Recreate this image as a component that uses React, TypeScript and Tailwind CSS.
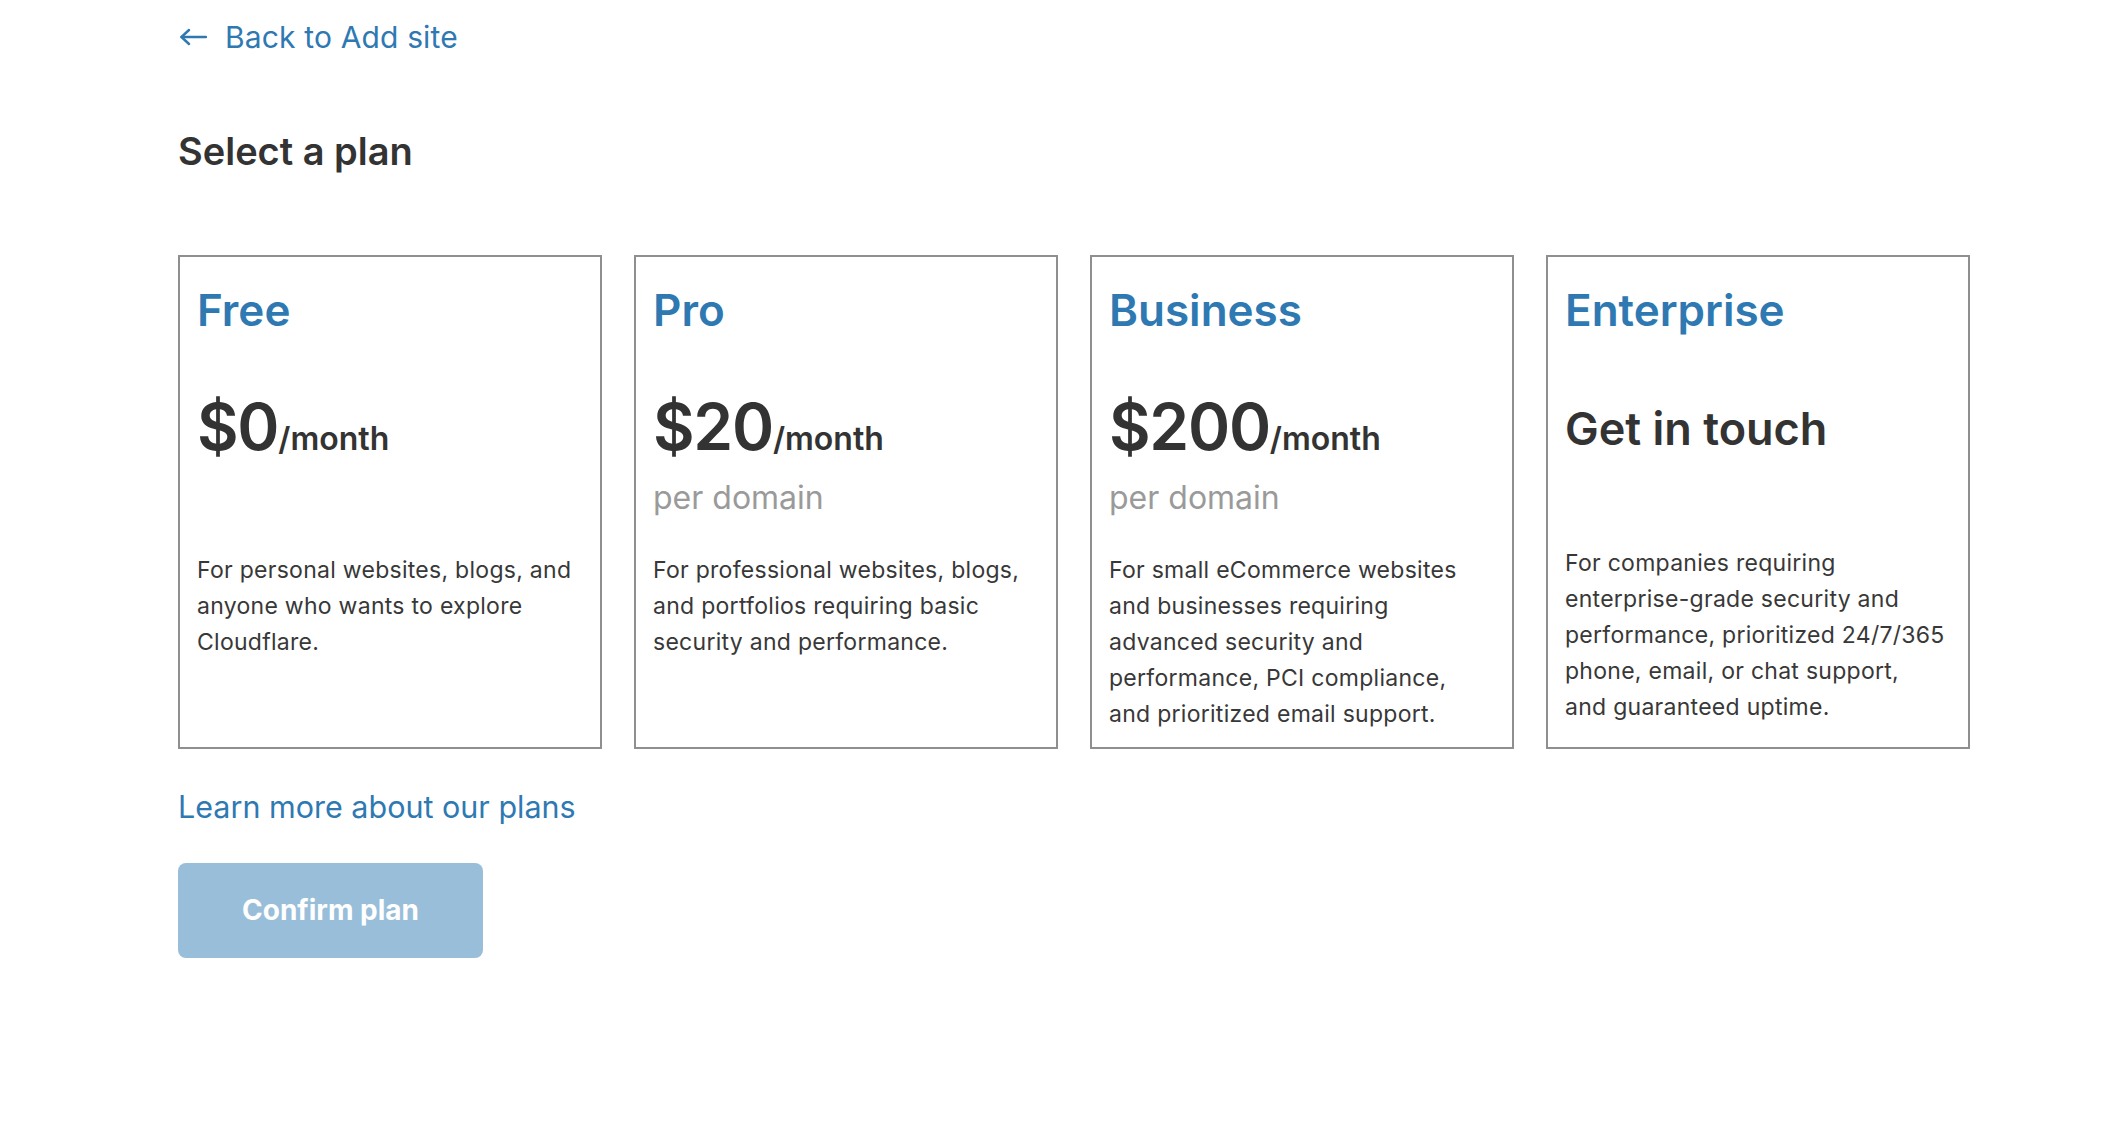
type Plan = {
    name: string;
    price?: string;
    perDomain?: boolean;
    lines: string[];
};

const plans: Plan[] = [
    {
        name: "Free",
        price: "$0",
        lines: [
            "For personal websites, blogs, and",
            "anyone who wants to explore",
            "Cloudflare.",
        ],
    },
    {
        name: "Pro",
        price: "$20",
        perDomain: true,
        lines: [
            "For professional websites, blogs,",
            "and portfolios requiring basic",
            "security and performance.",
        ],
    },
    {
        name: "Business",
        price: "$200",
        perDomain: true,
        lines: [
            "For small eCommerce websites",
            "and businesses requiring",
            "advanced security and",
            "performance, PCI compliance,",
            "and prioritized email support.",
        ],
    },
    {
        name: "Enterprise",
        lines: [
            "For companies requiring",
            "enterprise-grade security and",
            "performance, prioritized 24/7/365",
            "phone, email, or chat support,",
            "and guaranteed uptime.",
        ],
    },
];

function PlanCard({ plan }: { plan: Plan }) {
    return (
        <div className="flex h-[494px] flex-col border-2 border-[#8f8f8f] bg-white px-[17px] pt-[31px]">
            <h2 className="text-[44px] leading-none font-semibold text-[#2f79b2]">
                {plan.name}
            </h2>
            {plan.price ? (
                <div className="mt-[63px] h-[157px]">
                    <div className="flex items-baseline leading-none text-[#333333]">
                        <span className="text-[64px] font-semibold tracking-[-0.02em]">
                            {plan.price}
                        </span>
                        <span className="text-[32px] font-semibold">/month</span>
                    </div>
                    {plan.perDomain ? (
                        <p className="mt-[23px] text-[32px] leading-none text-[#9a9a9a]">
                            per domain
                        </p>
                    ) : null}
                </div>
            ) : (
                <div className="mt-[63px] h-[150px] pt-[11px]">
                    <p className="text-[45px] leading-none font-semibold text-[#333333]">
                        Get in touch
                    </p>
                </div>
            )}
            <p className="text-[23px] leading-[36px] tracking-[0.012em] whitespace-nowrap text-[#383838]">
                {plan.lines.map((line, i) => (
                    <span key={i} className="block">
                        {line}
                    </span>
                ))}
            </p>
        </div>
    );
}

export default function App() {
    return (
        <div className="min-h-screen bg-white pt-[22px] pl-[178px] font-['Inter',sans-serif] text-[#333333]">
            <a
                href="#"
                className="flex h-[30px] w-fit items-center gap-[18px] text-[30px] leading-none text-[#2f79b2]"
            >
                <svg
                    width="27"
                    height="18"
                    viewBox="0 0 27 18"
                    fill="none"
                    stroke="currentColor"
                    strokeWidth="2.4"
                    strokeLinecap="round"
                    strokeLinejoin="round"
                    className="ml-[2px]"
                >
                    <path d="M26 9H1.5" />
                    <path d="M9 2L1.5 9L9 16" />
                </svg>
                <span className="tracking-[0.005em]">Back to Add site</span>
            </a>

            <h1 className="mt-[80px] text-[38px] leading-none font-semibold text-[#333333]">
                Select a plan
            </h1>

            <div className="mt-[85px] grid w-[1792px] grid-cols-4 gap-[32px]">
                {plans.map((plan) => (
                    <PlanCard key={plan.name} plan={plan} />
                ))}
            </div>

            <a
                href="#"
                className="mt-[43px] block w-fit text-[30.5px] leading-none text-[#2f79b2]"
            >
                Learn more about our plans
            </a>

            <button
                type="button"
                disabled
                className="mt-[40px] flex h-[95px] w-[305px] items-center justify-center rounded-[8px] bg-[#99bed9] text-[28px] font-bold text-white"
            >
                Confirm plan
            </button>
        </div>
    );
}
